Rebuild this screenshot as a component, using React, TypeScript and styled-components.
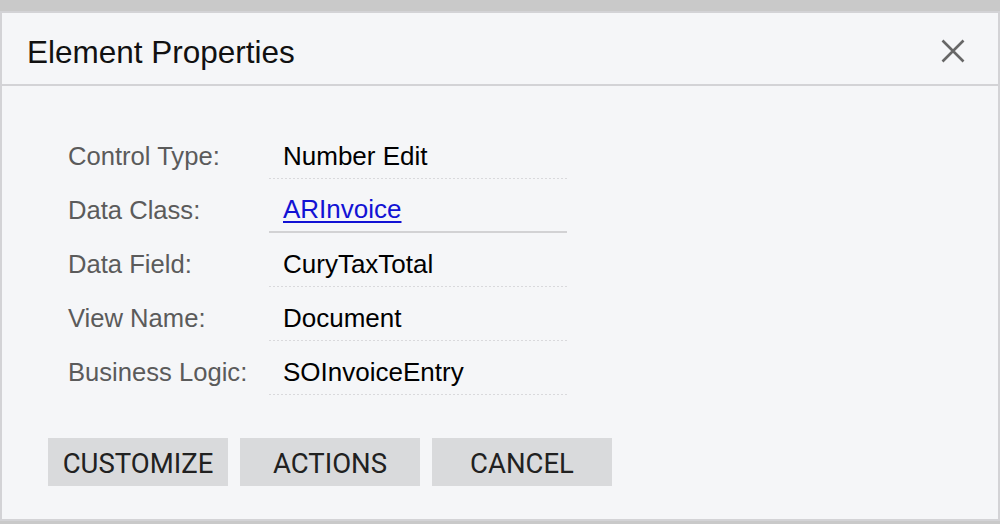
import React from "react";
import styled, { createGlobalStyle } from "styled-components";

const Global = createGlobalStyle`
  html, body { margin: 0; padding: 0; }
  body {
    background: #c9c9c9;
    font-family: "Liberation Sans", Arial, sans-serif;
    width: 1000px;
    height: 524px;
    overflow: hidden;
  }
  #root { padding-top: 11px; }
`;

const Dialog = styled.div`
  box-sizing: border-box;
  width: 1000px;
  height: 510px;
  background: #f5f6f8;
  border: 2px solid #d3d3d6;
  display: flex;
  flex-direction: column;
`;

const Header = styled.div`
  box-sizing: border-box;
  height: 73px;
  padding: 7px 33px 0 25px;
  display: flex;
  align-items: center;
  justify-content: space-between;
  border-bottom: 2px solid #d3d3d6;
`;

const Title = styled.h1`
  margin: 0;
  font-size: 31.5px;
  font-weight: 400;
  color: #111;
`;

const CloseButton = styled.button`
  border: 0;
  background: none;
  padding: 0;
  width: 24px;
  height: 24px;
  margin-top: -3px;
  display: flex;
  align-items: center;
  justify-content: center;
  cursor: pointer;
`;

const Body = styled.div`
  padding: 39px 0 0 66px;
  display: flex;
  flex-direction: column;
`;

const Row = styled.div`
  display: grid;
  grid-template-columns: 201px 298px;
  height: 54px;
`;

const Label = styled.div`
  display: flex;
  align-items: center;
  padding-top: 8px;
  font-size: 25.6px;
  color: #5b5b5b;
`;

const Value = styled.div<{ $active?: boolean }>`
  box-sizing: border-box;
  display: flex;
  align-items: center;
  padding: 8px 0 0 14px;
  font-size: 26px;
  color: #000;
  ${(p) =>
    p.$active
      ? `border-bottom: 2px solid #d2d2d4;`
      : `background-image: linear-gradient(to right, #d9d9dc 50%, transparent 50%);
         background-size: 4px 1px;
         background-repeat: repeat-x;
         background-position: left bottom;`}
`;

const Link = styled.a`
  color: #1212d4;
  text-decoration: underline;
  text-underline-offset: 3px;
  text-decoration-thickness: 2px;
`;

const Footer = styled.div`
  display: flex;
  gap: 12px;
  padding: 43px 0 0 46px;
`;

const Button = styled.button`
  width: 180px;
  height: 48px;
  border: 0;
  background: #d9dadc;
  color: #212121;
  font-family: Roboto, "Liberation Sans", sans-serif;
  font-size: 27.5px;
  padding: 2px 0 0;
  text-transform: uppercase;
  cursor: pointer;
`;

const rows = [
  { label: "Control Type:", value: "Number Edit" },
  { label: "Data Class:", value: "ARInvoice", link: true },
  { label: "Data Field:", value: "CuryTaxTotal" },
  { label: "View Name:", value: "Document" },
  { label: "Business Logic:", value: "SOInvoiceEntry" },
];

export default function App() {
  return (
    <>
      <Global />
      <Dialog>
        <Header>
          <Title>Element Properties</Title>
          <CloseButton aria-label="Close">
            <svg width="24" height="24" viewBox="0 0 24 24">
              <path d="M1.5 1.5 L22.5 22.5 M22.5 1.5 L1.5 22.5" stroke="#676767" strokeWidth="2.6" fill="none" />
            </svg>
          </CloseButton>
        </Header>
        <Body>
          {rows.map((r) => (
            <Row key={r.label}>
              <Label>{r.label}</Label>
              <Value $active={r.link}>
                {r.link ? <Link href="#">{r.value}</Link> : r.value}
              </Value>
            </Row>
          ))}
        </Body>
        <Footer>
          <Button>Customize</Button>
          <Button>Actions</Button>
          <Button>Cancel</Button>
        </Footer>
      </Dialog>
    </>
  );
}
